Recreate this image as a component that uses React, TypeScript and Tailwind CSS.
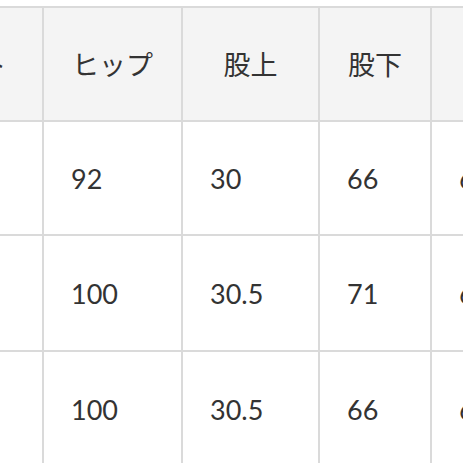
import React from "react";

const headers = ["ウエスト", "ヒップ", "股上", "股下", "裾幅"];
const headerPad = ["pr-[9px]", "", "", "", "pl-[22px]"];
const rows = [
  ["S", "92", "30", "66", "64"],
  ["M", "100", "30.5", "71", "68"],
  ["L", "100", "30.5", "66", "66"],
];
const heights = ["h-[112px]", "h-[114px]", "h-[114px]"];

export default function App() {
  return (
    <div className="w-[463px] h-[463px] overflow-hidden bg-white">
      <div
        className="mt-[6px] ml-[-130px] inline-grid grid-cols-[170px_137px_135px_110px_110px] gap-[2px] p-[2px] bg-[#dadada] text-[#333333] text-[27px] leading-none"
        style={{ fontFamily: "Lato, 'Noto Sans CJK JP', sans-serif" }}
      >
        {headers.map((h, i) => (
          <div
            key={h}
            className={`${headerPad[i]} h-[112px] bg-[#f4f4f4] flex items-center justify-center whitespace-nowrap`}
          >
            {h}
          </div>
        ))}
        {rows.map((r, i) =>
          r.map((c, j) => (
            <div
              key={`${i}-${j}`}
              className={`${heights[i]} bg-white flex items-center pl-[27px] whitespace-nowrap`}
            >
              {c}
            </div>
          ))
        )}
      </div>
    </div>
  );
}
